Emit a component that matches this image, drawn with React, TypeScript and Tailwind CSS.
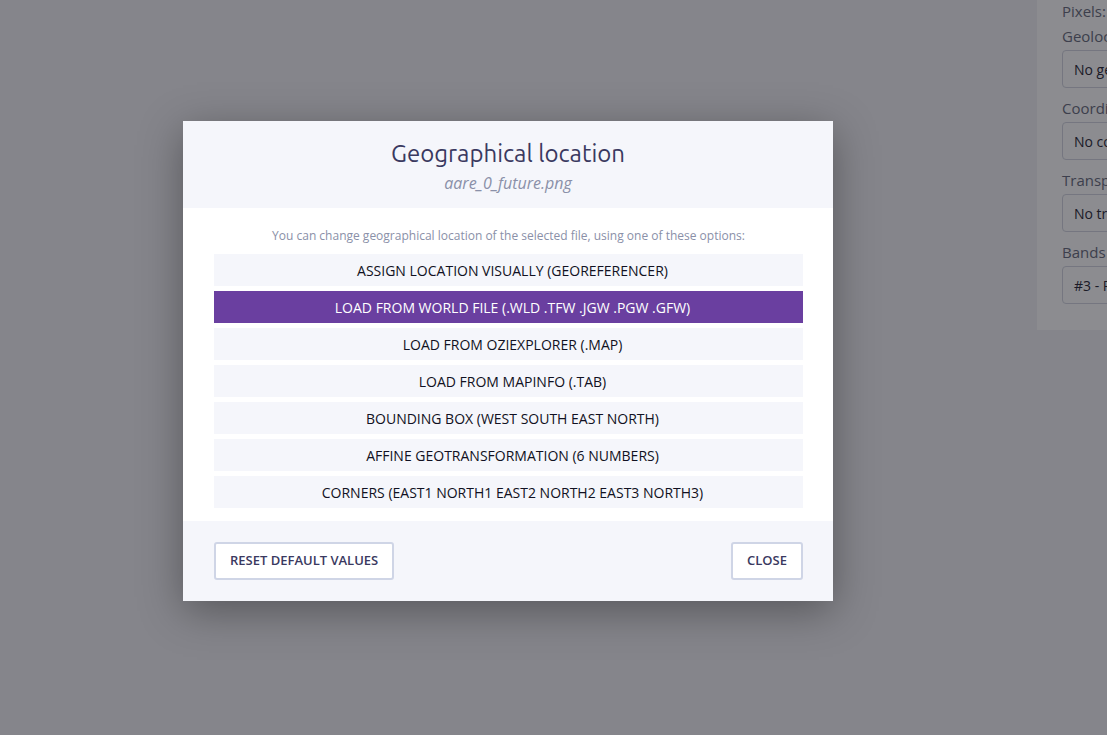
import React from 'react';

const options = [
  'ASSIGN LOCATION VISUALLY (GEOREFERENCER)',
  'LOAD FROM WORLD FILE (.WLD .TFW .JGW .PGW .GFW)',
  'LOAD FROM OZIEXPLORER (.MAP)',
  'LOAD FROM MAPINFO (.TAB)',
  'BOUNDING BOX (WEST SOUTH EAST NORTH)',
  'AFFINE GEOTRANSFORMATION (6 NUMBERS)',
  'CORNERS (EAST1 NORTH1 EAST2 NORTH2 EAST3 NORTH3)',
];

const fields = [
  { label: 'Geolocation', value: 'No geolocation' },
  { label: 'Coordinate system', value: 'No coordinate system' },
  { label: 'Transparency', value: 'No transparency' },
  { label: 'Bands', value: '#3 - RGB' },
];

export default function App() {
  const selected = 1;

  return (
    <div className="relative h-[735px] w-[1107px] overflow-hidden bg-[#f2f2f5] font-['Open_Sans',sans-serif]">
      {/* Page behind the dialog */}
      <div className="flex h-full justify-end">
        <div className="h-[330px] w-[70px] overflow-hidden bg-white pl-[25px]">
          <div className="w-[200px]">
            <div className="mb-[3px] text-[15px] leading-[22px] text-[#6b6f80]">Pixels:</div>
            {fields.map(f => (
              <div key={f.label} className="mb-[9px]">
                <div className="text-[15px] leading-[23px] text-[#6b6f80]">{f.label}</div>
                <div className="mt-[2px] flex h-[38px] items-center rounded-[4px] border border-[#d3d6e0] px-[11px] text-[14px] text-[#2c2c3a]">
                  {f.value}
                </div>
              </div>
            ))}
          </div>
        </div>
      </div>

      {/* Backdrop */}
      <div className="absolute inset-0 bg-[rgba(10,10,20,0.47)]" />

      {/* Dialog */}
      <div className="absolute left-[183px] top-[121px] w-[650px] shadow-[0_10px_40px_rgba(0,0,0,0.35)]">
        <div className="flex h-[87px] flex-col items-center bg-[#f5f6fb] pt-[17px]">
          <h2 className="font-['Ubuntu','Open_Sans',sans-serif] text-[24px] leading-[31px] text-[#3a3960]">
            Geographical location
          </h2>
          <div className="mt-[4px] text-[16px] italic leading-[21px] text-[#8a90a8]">aare_0_future.png</div>
        </div>

        <div className="bg-white pb-[13px] pl-[31px] pr-[30px] pt-[19px]">
          <p className="mb-[9px] text-center text-[12px] leading-[18px] text-[#8a90a8]">
            You can change geographical location of the selected file, using one of these options:
          </p>
          <div className="flex flex-col gap-[5px]">
            {options.map((o, i) => (
              <button
                key={o}
                className={`h-[32px] w-full pl-[8px] text-[14px] ${
                  i === selected ? 'bg-[#6a3fa0] text-white' : 'bg-[#f5f6fb] text-[#111122]'
                }`}
              >
                {o}
              </button>
            ))}
          </div>
        </div>

        <div className="flex h-[80px] items-center justify-between bg-[#f5f6fb] pl-[31px] pr-[30px]">
          <button className="h-[38px] rounded-[3px] border-2 border-[#cfd5e6] bg-white px-[14px] text-[13px] font-semibold text-[#3a3960]">
            RESET DEFAULT VALUES
          </button>
          <button className="h-[38px] rounded-[3px] border-2 border-[#cfd5e6] bg-white px-[14px] text-[13px] font-semibold text-[#3a3960]">
            CLOSE
          </button>
        </div>
      </div>
    </div>
  );
}
